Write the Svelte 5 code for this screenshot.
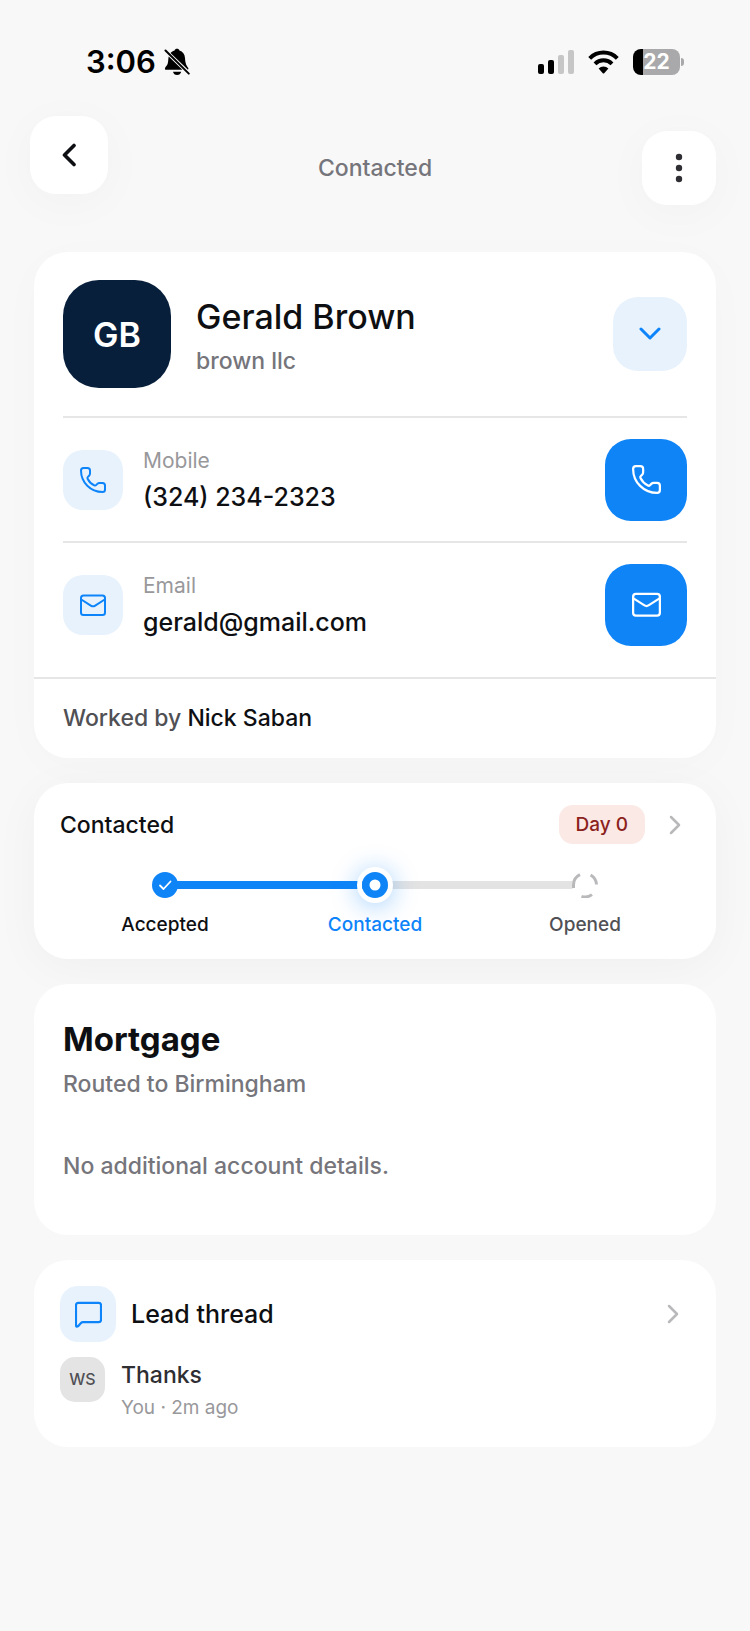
<script lang="ts">
	let expanded = $state(true);

	const lead = {
		name: 'Gerald Brown',
		initials: 'GB',
		company: 'brown llc',
		worked_by: 'Nick Saban'
	};

	const contacts = [
		{ kind: 'phone', label: 'Mobile', value: '(324) 234-2323', href: 'tel:3242342323' },
		{ kind: 'mail', label: 'Email', value: 'gerald@gmail.com', href: 'mailto:gerald@gmail.com' }
	];

	const stages = [
		{ name: 'Accepted', status: 'done' },
		{ name: 'Contacted', status: 'current' },
		{ name: 'Opened', status: 'next' }
	];
</script>

{#snippet contact_icon(kind: string)}
	<svg class="contact-icon" viewBox="0 0 26 26" aria-hidden="true">
		{#if kind === 'phone'}
			<path
				d="M3.5 1h4Q10 1 10 3.5v3q0 1.3-.9 2.2l-1.2 1.2q-.8.8-.3 1.8c1.4 2.9 3.8 5.3 6.7 6.7q1 .5 1.800-.3l1.200-1.200q.9-.9 2.200-.9h3q2.500 0 2.500 2.500v4q0 2.500-2.500 2.500C10.600 25 1 15.400 1 3.500Q1 1 3.500 1Z"
			/>
		{:else}
			<rect x="1" y="3.5" width="24" height="19.5" rx="2.5" />
			<path d="m1.3 7.5 9.9 6.3q1.8 1.1 3.6 0l9.9-6.3" />
		{/if}
	</svg>
{/snippet}

{#snippet chevron_right()}
	<svg class="chevron" viewBox="0 0 12 20" aria-hidden="true">
		<path d="m2 2 8 8-8 8" />
	</svg>
{/snippet}

<div class="screen">
	<div class="status-bar">
		<div class="clock">
			<span>3:06</span>
			<svg class="bell" viewBox="0 0 26 28" aria-hidden="true">
				<path
					d="M6.5 5.1C8 3.5 9.600 2.900 10.600 2.600 10.800 1.200 11.700.7 13 .7s2.200.5 2.400 1.900c3.400 1 5.400 3.700 5.600 7.400.2 4 .7 6.200 2.200 8.400.7 1 1.300 1.600 1.200 2.400l-.4.9ZM4.700 8.600 18.400 21.800H2.300C.9 21.800.6 20.700 1.200 19.700c.6-1 1.800-2 2.400-3.600.8-2.200.5-4.900 1.100-7.500ZM9 23.700h8.200c-.4 2-2 3.300-4.100 3.300S9.400 25.700 9 23.700Z"
				/>
				<path class="slash" d="M1.500 2.500 24.800 25.600" />
			</svg>
		</div>
		<div class="indicators">
			<svg class="signal" viewBox="0 0 36 24" aria-hidden="true">
				<rect x="0" y="14" width="6" height="10" rx="2" />
				<rect x="10" y="10" width="6" height="14" rx="2" />
				<rect class="off" x="20" y="5" width="6" height="19" rx="2" />
				<rect class="off" x="30" y="0" width="6" height="24" rx="2" />
			</svg>
			<svg class="wifi" viewBox="0 0 31 24" aria-hidden="true">
				<path class="arc" d="M1.700 8.300a19.500 19.500 0 0 1 27.600 0M7 13.800a12 12 0 0 1 17 0" />
				<path d="M10.600 18.600a7 7 0 0 1 9.800 0l-4.200 4.600q-.7.7-1.400 0Z" />
			</svg>
			<div class="battery"><span>22</span></div>
		</div>
	</div>

	<header>
		<button class="back" aria-label="Back">
			<svg viewBox="0 0 14 24" aria-hidden="true"><path d="M12 2.500 2.500 12l9.500 9.500" /></svg>
		</button>
		<h1>Contacted</h1>
		<button class="menu" aria-label="More options">
			<svg viewBox="0 0 8 30" aria-hidden="true">
				<circle cx="4" cy="4" r="3.200" />
				<circle cx="4" cy="15" r="3.200" />
				<circle cx="4" cy="26" r="3.200" />
			</svg>
		</button>
	</header>

	<main>
		<section class="card person">
			<div class="person-head">
				<div class="avatar">{lead.initials}</div>
				<div class="who">
					<h2>{lead.name}</h2>
					<p>{lead.company}</p>
				</div>
				<button
					class="toggle"
					aria-label="Toggle contact details"
					aria-expanded={expanded}
					onclick={() => (expanded = !expanded)}
				>
					<svg viewBox="0 0 22 14" aria-hidden="true"><path d="m2 2 9 9 9-9" /></svg>
				</button>
			</div>
			{#if expanded}
				<div class="contacts">
					{#each contacts as contact}
						<div class="contact">
							<div class="tile">{@render contact_icon(contact.kind)}</div>
							<div class="detail">
								<span class="label">{contact.label}</span>
								<span class="value">{contact.value}</span>
							</div>
							<a class="action" href={contact.href} aria-label={contact.label}>
								{@render contact_icon(contact.kind)}
							</a>
						</div>
					{/each}
				</div>
			{/if}
			<p class="worked">Worked by <strong>{lead.worked_by}</strong></p>
		</section>

		<section class="card progress">
			<div class="progress-head">
				<h3>Contacted</h3>
				<span class="day">Day 0</span>
				{@render chevron_right()}
			</div>
			<ol class="stages">
				{#each stages as stage}
					<li class={stage.status}>
						<div class="node">
							<svg viewBox="0 0 26 26" aria-hidden="true">
								{#if stage.status === 'done'}
									<circle cx="13" cy="13" r="13" />
									<path d="m8 13.500 3.500 3.500 7-7.500" />
								{:else if stage.status === 'current'}
									<circle cx="13" cy="13" r="13" />
									<circle class="hole" cx="13" cy="13" r="5.500" />
								{:else}
									<circle class="hole" cx="13" cy="13" r="13" />
									<path d="M1.500 16V13A11.500 11.500 0 0 1 8 2.600M18.600 3a11.500 11.500 0 0 1 5.900 9.500M20 22.600A11.500 11.500 0 0 1 9.500 24.300" />
								{/if}
							</svg>
						</div>
						<span>{stage.name}</span>
					</li>
				{/each}
			</ol>
		</section>

		<section class="card account">
			<h2>Mortgage</h2>
			<p>Routed to Birmingham</p>
			<p class="empty">No additional account details.</p>
		</section>

		<section class="card thread">
			<div class="thread-head">
				<div class="tile">
					<svg viewBox="0 0 28 28" aria-hidden="true">
						<path d="M3.500 2h21Q27 2 27 4.500v15q0 2.500-2.500 2.500H8.200q-1.200 0-2 .8l-2.800 3.100Q1 27.600 1 24.500v-20Q1 2 3.500 2Z" />
					</svg>
				</div>
				<h3>Lead thread</h3>
				{@render chevron_right()}
			</div>
			<div class="message">
				<div class="sender">WS</div>
				<div>
					<p class="body">Thanks</p>
					<p class="meta">You · 2m ago</p>
				</div>
			</div>
		</section>
	</main>
</div>

<style>
	:global(body) {
		background: #f8f8f8;
	}

	.screen {
		min-height: 100vh;
		box-sizing: border-box;
		padding-bottom: 48px;
		background: #f8f8f8;
		color: #0e0f12;
		font-family: Inter, 'Liberation Sans', sans-serif;
		font-weight: 500;
		overflow: hidden;
	}

	h1,
	h2,
	h3,
	p,
	ol {
		margin: 0;
		padding: 0;
		font-weight: 500;
	}

	button {
		border: none;
		padding: 0;
		cursor: pointer;
	}

	svg {
		display: block;
		flex: none;
	}

	/* Status bar */
	.status-bar {
		display: flex;
		justify-content: space-between;
		align-items: center;
		height: 76px;
		padding: 24px 66px 16px 86px;
		color: #000;
	}

	.clock {
		display: flex;
		align-items: center;
		gap: 8px;
		font-size: 31px;
		line-height: 40px;
		font-weight: 600;
	}

	.bell {
		width: 26px;
		height: 28px;
	}

	.slash {
		stroke: #000;
		stroke-width: 2;
		stroke-linecap: round;
	}

	.indicators {
		display: flex;
		align-items: center;
		gap: 14px;
	}

	.signal {
		width: 36px;
		height: 24px;
	}

	.off {
		fill: #c6c6c7;
	}

	.wifi {
		width: 31px;
		height: 24px;
	}

	.arc {
		fill: none;
		stroke: #000;
		stroke-width: 4;
	}

	.battery {
		position: relative;
		width: 47px;
		height: 26px;
		margin-right: 4px;
		border-radius: 8px;
		background: linear-gradient(to right, #000 22%, #a9a9ab 22%);
		color: #fff;
		font-size: 21px;
		line-height: 26px;
		font-weight: 700;
		text-align: center;
	}

	.battery::after {
		content: '';
		position: absolute;
		left: 48px;
		top: 9px;
		width: 3px;
		height: 8px;
		border-radius: 0 4px 4px 0;
		background: #a9a9ab;
	}

	/* Header */
	header {
		display: grid;
		grid-template-columns: 1fr auto 1fr;
		align-items: end;
		height: 89px;
		padding: 0 30px;
	}

	header button {
		display: flex;
		align-items: center;
		justify-content: center;
		background: #fff;
		box-shadow: 0 8px 48px rgba(0, 0, 0, 0.03);
	}

	.back {
		align-self: start;
		width: 78px;
		height: 78px;
		border-radius: 26px;
	}

	.back svg {
		width: 14px;
		height: 24px;
		fill: none;
		stroke: #0e0f12;
		stroke-width: 3.6;
		stroke-linecap: round;
		stroke-linejoin: round;
	}

	h1 {
		font-size: 23px;
		line-height: 74px;
		color: #75757b;
	}

	.menu {
		justify-self: end;
		width: 74px;
		height: 74px;
		margin-right: 4px;
		border-radius: 25px;
	}

	.menu svg {
		width: 8px;
		height: 30px;
		fill: #2e2e33;
	}

	/* Cards */
	main {
		display: flex;
		flex-direction: column;
		gap: 25px;
		padding: 47px 34px 0;
	}

	.card {
		border-radius: 34px;
		background: #fff;
	}

	.tile {
		display: flex;
		flex: none;
		align-items: center;
		justify-content: center;
		width: 60px;
		height: 60px;
		border-radius: 20px;
		background: #e7f2fd;
		color: #0d84f9;
	}

	.contact-icon {
		width: 26px;
		height: 26px;
		fill: none;
		stroke: currentColor;
		stroke-width: 2;
		stroke-linejoin: round;
	}

	.chevron {
		width: 12px;
		height: 20px;
		fill: none;
		stroke: #b9b9bb;
		stroke-width: 2.5;
		stroke-linecap: round;
		stroke-linejoin: round;
	}

	/* Person */
	.person {
		box-shadow: 0 8px 48px rgba(0, 0, 0, 0.02);
	}

	.person-head {
		display: flex;
		align-items: center;
		gap: 25px;
		margin: 0 29px;
		padding: 28px 0;
	}

	.avatar {
		display: flex;
		flex: none;
		align-items: center;
		justify-content: center;
		width: 108px;
		height: 108px;
		border-radius: 36px;
		background: #081f3b;
		color: #fff;
		font-size: 34px;
		font-weight: 600;
	}

	.who {
		flex: 1;
		padding-top: 4px;
	}

	.who h2 {
		font-size: 34px;
		line-height: 44px;
	}

	.who p {
		font-size: 23px;
		line-height: 32px;
		padding-top: 6px;
		color: #75757b;
	}

	.toggle {
		display: flex;
		flex: none;
		align-items: center;
		justify-content: center;
		width: 74px;
		height: 74px;
		border-radius: 25px;
		background: #e7f2fd;
	}

	.toggle svg {
		width: 22px;
		height: 14px;
		fill: none;
		stroke: #0d84f9;
		stroke-width: 3;
		stroke-linecap: round;
		stroke-linejoin: round;
	}

	.contacts {
		margin: 0 29px;
		padding-bottom: 11px;
	}

	.contact {
		display: flex;
		align-items: center;
		gap: 20px;
		height: 123px;
		border-top: 2px solid #e6e6e7;
	}

	.detail {
		display: flex;
		flex: 1;
		flex-direction: column;
		padding-top: 2px;
	}

	.label {
		font-size: 21px;
		line-height: 32px;
		font-weight: 400;
		color: #98989b;
	}

	.value {
		font-size: 25px;
		line-height: 40px;
		color: #0e0f12;
	}

	.action {
		display: flex;
		flex: none;
		align-items: center;
		justify-content: center;
		width: 82px;
		height: 82px;
		border-radius: 26px;
		background: #0f84f7;
		color: #fff;
	}

	.action .contact-icon {
		width: 29px;
		height: 29px;
	}

	.worked {
		padding: 0 29px;
		border-top: 2px solid #e6e6e7;
		font-size: 23px;
		line-height: 79px;
		color: #505055;
	}

	.worked strong {
		font-weight: 500;
		color: #0e0f12;
	}

	/* Progress */
	.progress {
		padding: 22px 26px 19px;
		box-shadow: 0 8px 48px rgba(0, 0, 0, 0.04);
	}

	.progress-head {
		display: flex;
		align-items: center;
		padding-right: 9px;
	}

	.progress-head h3 {
		flex: 1;
		font-size: 23px;
		line-height: 32px;
	}

	.day {
		margin-right: 24px;
		padding: 0 17px;
		border-radius: 14px;
		background: #fbe9e6;
		color: #8c221c;
		font-size: 19px;
		line-height: 39px;
	}

	.stages {
		display: grid;
		grid-template-columns: repeat(3, 1fr);
		padding-top: 28px;
		list-style: none;
	}

	.stages li {
		position: relative;
		display: flex;
		flex-direction: column;
		align-items: center;
		gap: 12px;
		font-size: 19px;
		line-height: 30px;
	}

	/* Connector to the following stage */
	.stages li:not(:last-child)::before {
		content: '';
		position: absolute;
		left: 50%;
		top: 9px;
		width: 100%;
		height: 8px;
		background: #e3e3e3;
	}

	.stages li.done::before {
		background: #0f84f7;
	}

	.node {
		position: relative;
		z-index: 1;
		border-radius: 50%;
	}

	.node svg {
		width: 26px;
		height: 26px;
		fill: #0f84f7;
	}

	.node .hole {
		fill: #fff;
	}

	.node path {
		fill: none;
		stroke: #fff;
		stroke-width: 1.8;
		stroke-linecap: round;
		stroke-linejoin: round;
	}

	.current {
		color: #0d84f9;
	}

	.current .node {
		box-shadow:
			0 0 0 5px #fff,
			0 3px 24px 6px rgba(13, 132, 249, 0.35);
	}

	.next {
		color: #505055;
	}

	.next .node path {
		stroke: #b9b9bb;
		stroke-width: 3;
		stroke-linecap: butt;
	}

	/* Account */
	.account {
		padding: 31px 29px 52px;
		font-size: 23px;
		line-height: 34px;
		color: #75757b;
	}

	.account h2 {
		font-size: 33px;
		line-height: 48px;
		font-weight: 700;
		padding-bottom: 4px;
		color: #0e0f12;
	}

	.empty {
		padding-top: 48px;
	}

	/* Thread */
	.thread {
		padding: 26px 26px 24px;
	}

	.thread-head {
		display: flex;
		align-items: center;
		gap: 15px;
		padding-right: 11px;
	}

	.thread-head .tile {
		width: 56px;
		height: 56px;
		border-radius: 18px;
	}

	.thread-head .tile svg {
		width: 27px;
		height: 27px;
		fill: none;
		stroke: currentColor;
		stroke-width: 2.3;
		stroke-linejoin: round;
	}

	.thread-head h3 {
		flex: 1;
		font-size: 25px;
		line-height: 36px;
	}

	.message {
		display: flex;
		gap: 16px;
		padding-top: 15px;
	}

	.sender {
		width: 45px;
		height: 45px;
		border-radius: 15px;
		background: #e4e4e4;
		color: #505055;
		font-size: 16px;
		line-height: 45px;
		text-align: center;
	}

	.body {
		font-size: 23px;
		line-height: 36px;
		color: #2e2e33;
	}

	.meta {
		font-size: 19px;
		line-height: 30px;
		font-weight: 400;
		color: #98989b;
	}
</style>
